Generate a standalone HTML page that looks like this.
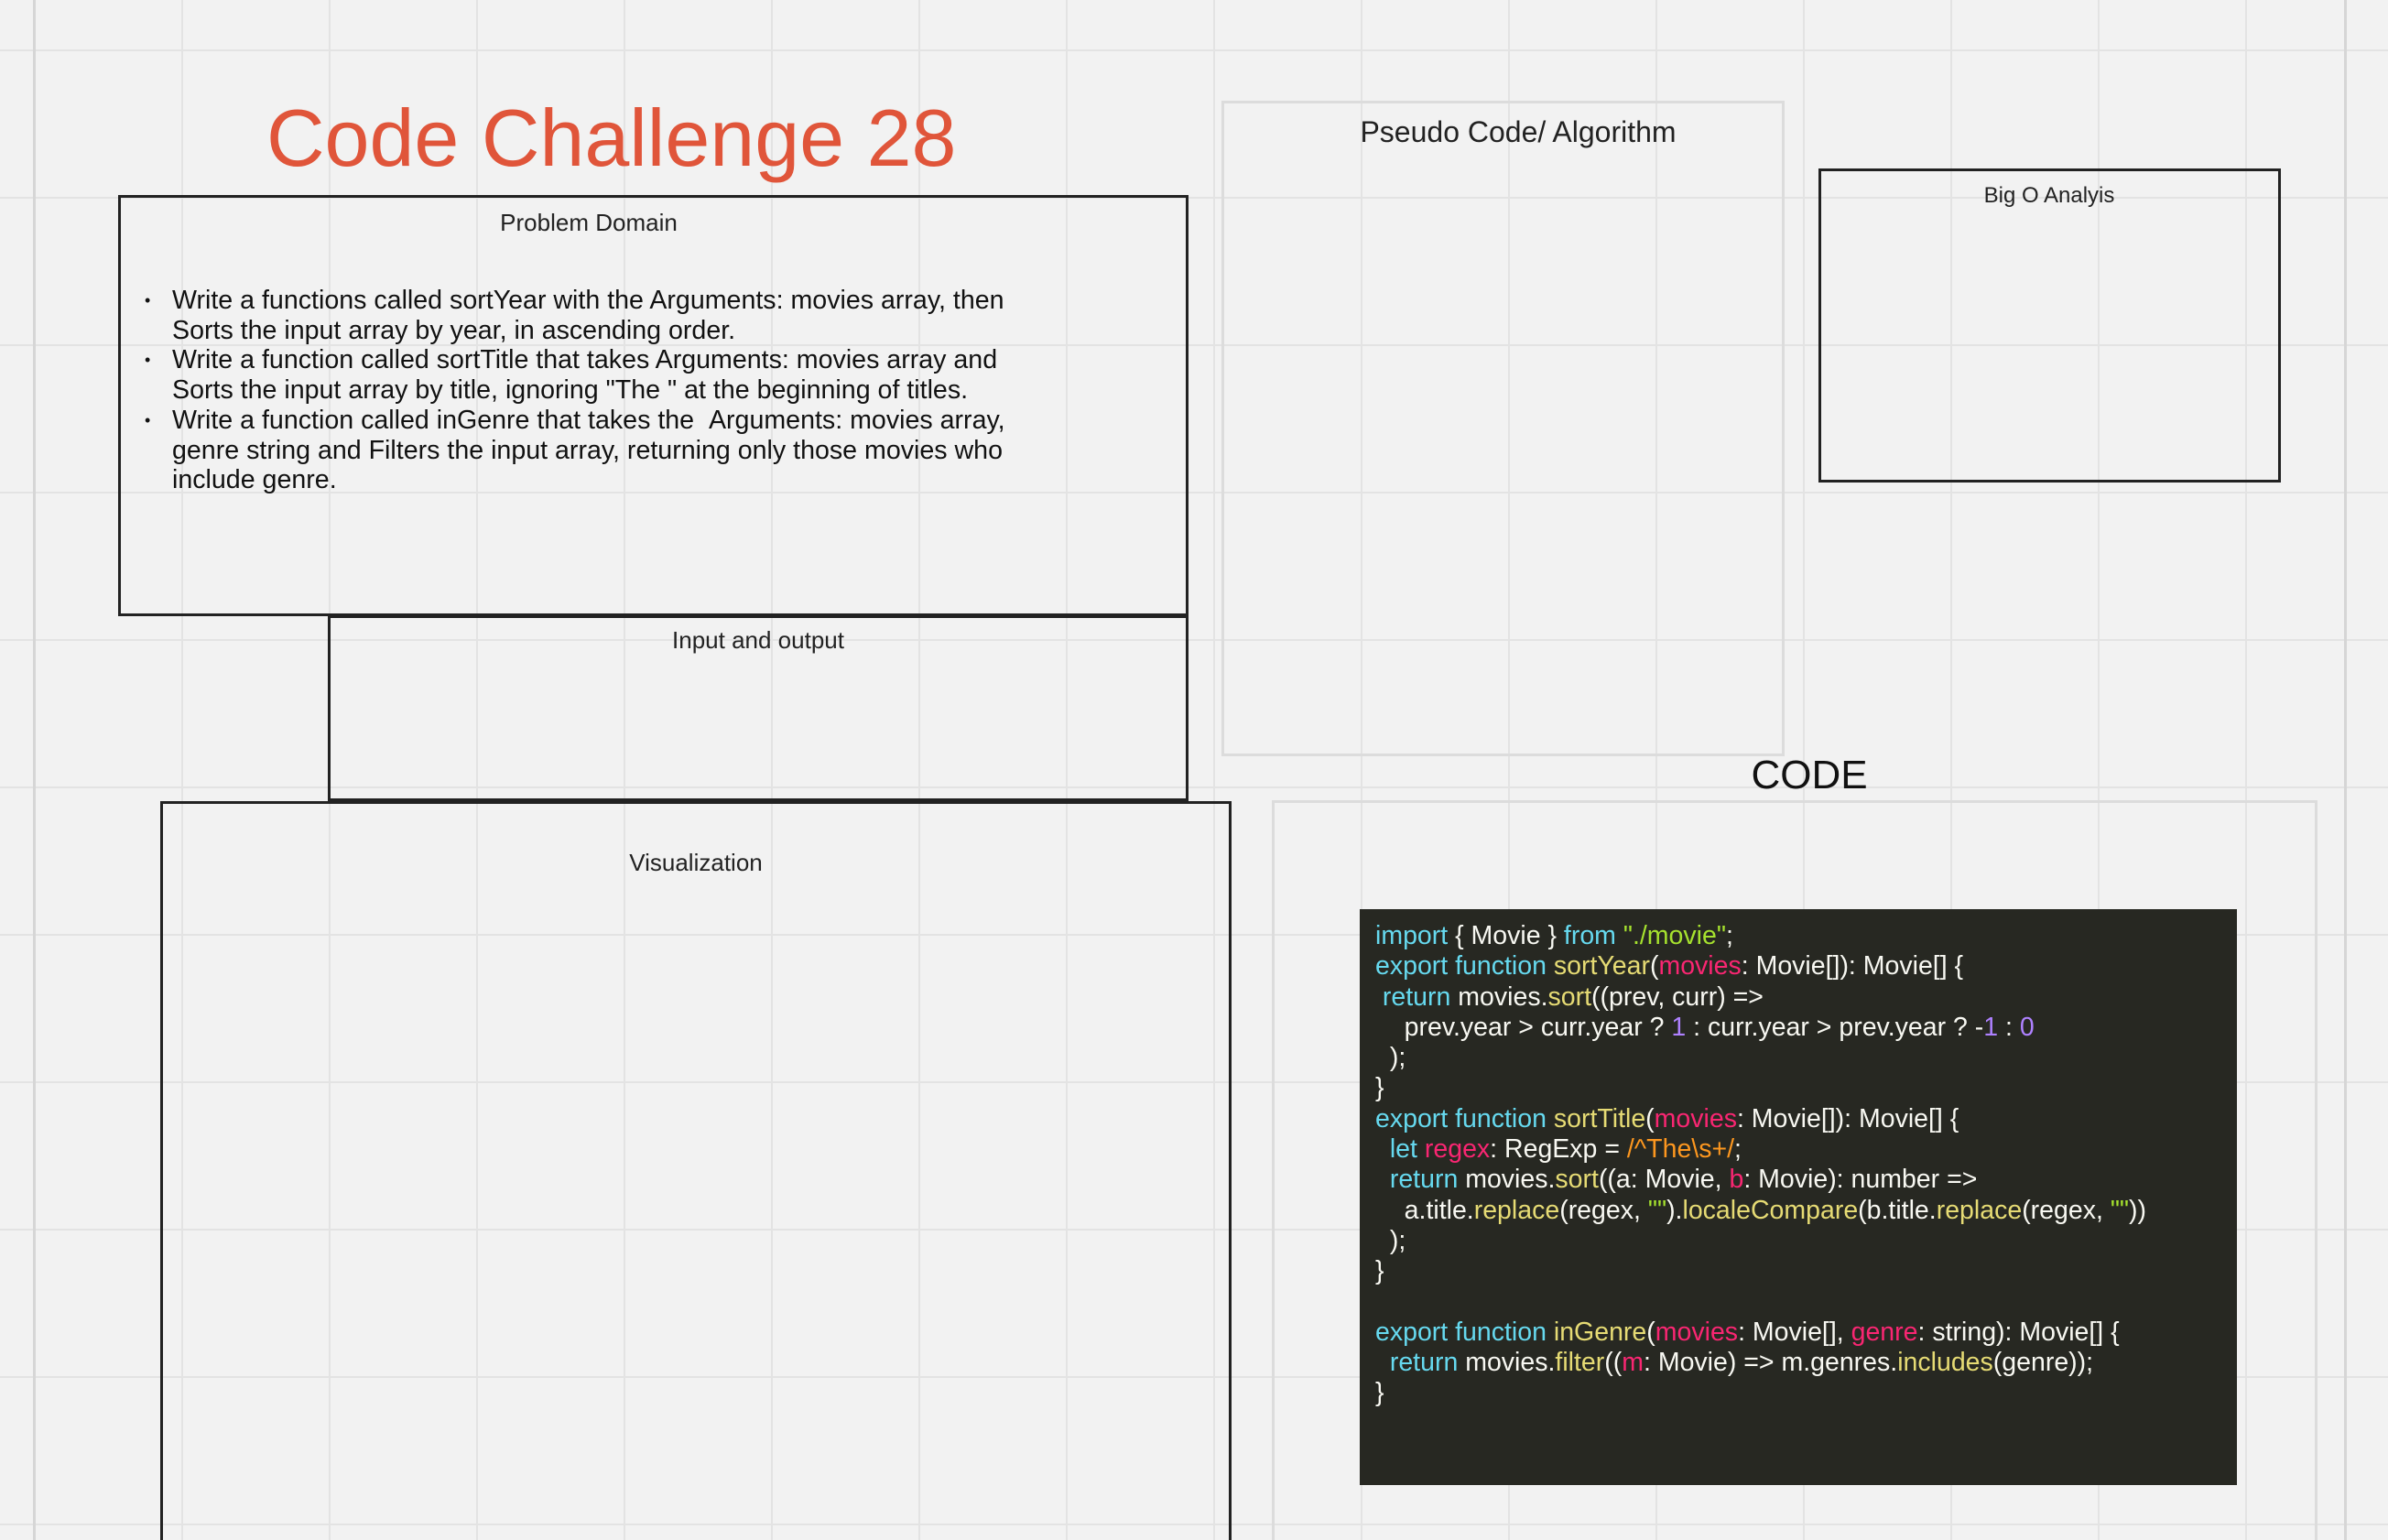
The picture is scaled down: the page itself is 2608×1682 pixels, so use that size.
<!DOCTYPE html>
<html style="margin:0;overflow:hidden;width:2608px;height:1682px"><head><meta charset="utf-8"><style>
body{margin:0;width:2608px;height:1682px;overflow:hidden;position:relative;font-family:"Liberation Sans",sans-serif;}
#w{position:absolute;left:0;top:0;width:2608px;height:1682px;overflow:hidden;background:#f2f2f2;
background-image:linear-gradient(to right,#e3e3e3 2px,transparent 2px),linear-gradient(to bottom,#e3e3e3 2px,transparent 2px);
background-size:161px 161px;background-position:37px 54px;}
.a{position:absolute;box-sizing:border-box}
.lbl{position:absolute;white-space:nowrap;color:#222;transform:translateX(-50%)}
.code{position:absolute;left:1502px;top:1006px;font-size:28.5px;line-height:33.3px;color:#f8f8f2;white-space:pre}
.k{color:#66d9ef}.f{color:#e6db74}.p{color:#f92672}.s{color:#a6e22e}.n{color:#ae81ff}.r{color:#fd971f}
</style></head><body><div id="w">
<div class="a" style="left:36px;top:0;width:3px;height:1682px;background:#d6d6d6"></div>
<div class="a" style="left:2560px;top:0;width:3px;height:1682px;background:#d6d6d6"></div>

<div class="a" style="left:291px;top:107px;font-size:88px;color:#e0553a;white-space:nowrap;line-height:1">Code Challenge 28</div>

<div class="a" style="left:129px;top:213px;width:1169px;height:460px;border:3px solid #222"></div>
<div class="lbl" style="left:643px;top:228px;font-size:26px">Problem Domain</div>
<div class="a" style="left:158px;top:312px;font-size:28.6px;line-height:32.7px;color:#111;white-space:nowrap">
<div style="position:relative;padding-left:30px"><span style="position:absolute;left:0;font-size:18px">•</span>Write a functions called sortYear with the Arguments: movies array, then<br>Sorts the input array by year, in ascending order.</div>
<div style="position:relative;padding-left:30px"><span style="position:absolute;left:0;font-size:18px">•</span>Write a function called sortTitle that takes Arguments: movies array and<br>Sorts the input array by title, ignoring "The " at the beginning of titles.</div>
<div style="position:relative;padding-left:30px"><span style="position:absolute;left:0;font-size:18px">•</span>Write a function called inGenre that takes the &nbsp;Arguments: movies array,<br>genre string and Filters the input array, returning only those movies who<br>include genre.</div>
</div>

<div class="a" style="left:358px;top:672px;width:940px;height:203px;border:3px solid #222"></div>
<div class="lbl" style="left:828px;top:684px;font-size:26px">Input and output</div>

<div class="a" style="left:175px;top:875px;width:1170px;height:807px;border:3px solid #222;border-bottom:none"></div>
<div class="lbl" style="left:760px;top:927px;font-size:26px">Visualization</div>

<div class="a" style="left:1334px;top:110px;width:615px;height:716px;border:3px solid #dcdcdc"></div>
<div class="lbl" style="left:1658px;top:126px;font-size:32px">Pseudo Code/ Algorithm</div>

<div class="a" style="left:1986px;top:184px;width:505px;height:343px;border:3px solid #222"></div>
<div class="lbl" style="left:2238px;top:200px;font-size:24px">Big O Analyis</div>

<div class="lbl" style="left:1976px;top:822px;font-size:44px;color:#111">CODE</div>
<div class="a" style="left:1389px;top:874px;width:1142px;height:808px;border:3px solid #dcdcdc;border-bottom:none"></div>

<div class="a" style="left:1485px;top:993px;width:958px;height:629px;background:#272822"></div>
<div class="code"><span class="k">import</span> { Movie } <span class="k">from</span> <span class="s">"./movie"</span>;
<span class="k">export function</span> <span class="f">sortYear</span>(<span class="p">movies</span>: Movie[]): Movie[] {
 <span class="k">return</span> movies.<span class="f">sort</span>((prev, curr) =&gt;
    prev.year &gt; curr.year ? <span class="n">1</span> : curr.year &gt; prev.year ? -<span class="n">1</span> : <span class="n">0</span>
  );
}
<span class="k">export function</span> <span class="f">sortTitle</span>(<span class="p">movies</span>: Movie[]): Movie[] {
  <span class="k">let</span> <span class="p">regex</span>: RegExp = <span class="r">/^The\s+/</span>;
  <span class="k">return</span> movies.<span class="f">sort</span>((a: Movie, <span class="p">b</span>: Movie): number =&gt;
    a.title.<span class="f">replace</span>(regex, <span class="s">""</span>).<span class="f">localeCompare</span>(b.title.<span class="f">replace</span>(regex, <span class="s">""</span>))
  );
}

<span class="k">export function</span> <span class="f">inGenre</span>(<span class="p">movies</span>: Movie[], <span class="p">genre</span>: string): Movie[] {
  <span class="k">return</span> movies.<span class="f">filter</span>((<span class="p">m</span>: Movie) =&gt; m.genres.<span class="f">includes</span>(genre));
}</div>
</div></body></html>
